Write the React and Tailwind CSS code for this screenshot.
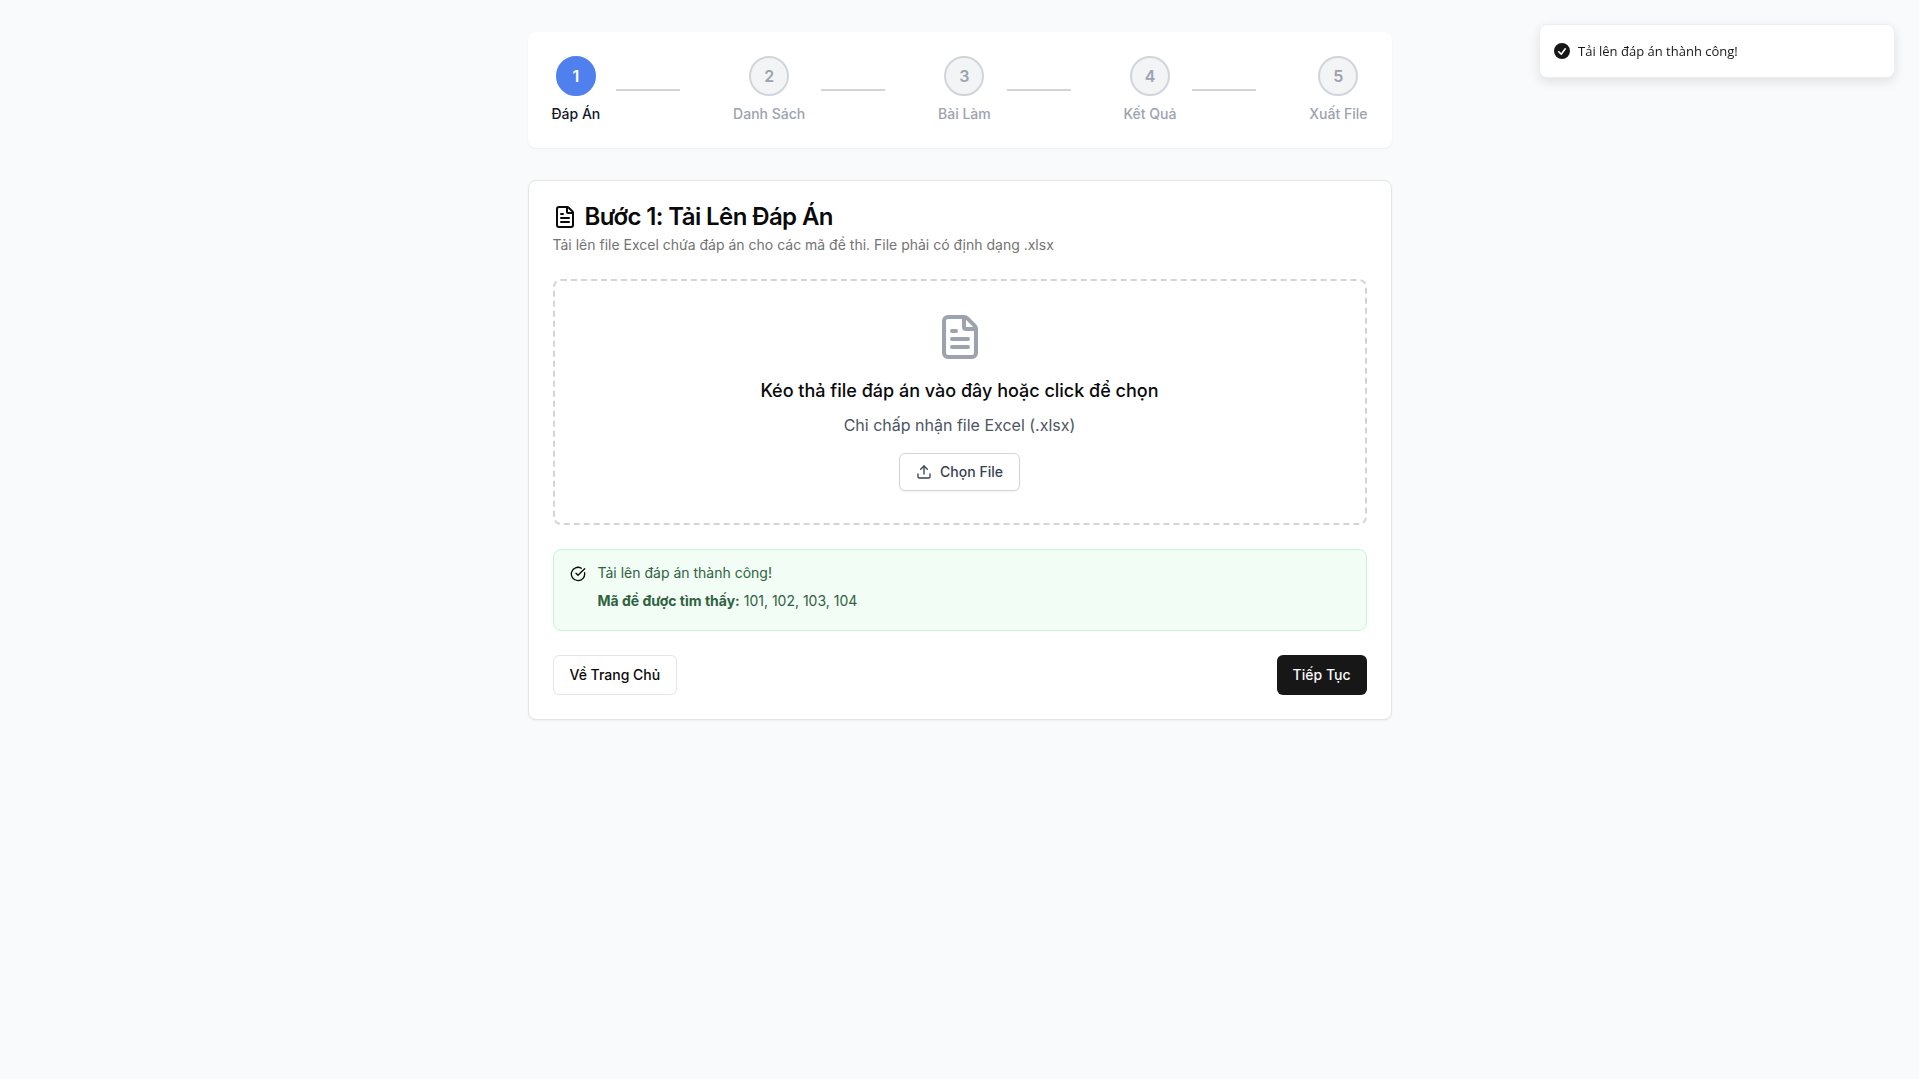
import { CircleCheckBig, FileText, Upload } from "lucide-react";

const steps = ["Đáp Án", "Danh Sách", "Bài Làm", "Kết Quả", "Xuất File"];

function Step({ n, label, active, last }) {
  return (
    <li className="flex items-center">
      <div className="flex flex-col items-center">
        <div
          className={
            active
              ? "flex size-10 items-center justify-center rounded-full border-2 border-[#4f80ee] bg-[#4f80ee] font-semibold text-white"
              : "flex size-10 items-center justify-center rounded-full border-2 border-[#d1d5db] bg-[#f3f4f6] font-semibold text-[#9ca3af]"
          }
        >
          {n}
        </div>
        <span className={active ? "mt-2 text-sm font-medium text-[#111827]" : "mt-2 text-sm font-medium text-[#9ca3af]"}>
          {label}
        </span>
      </div>
      {!last && <div className="mx-4 h-0.5 w-16 bg-[#d1d5db]" />}
    </li>
  );
}

export default function App() {
  return (
    <div className="min-h-screen bg-[#f9fafb] px-4 py-8 font-['Inter',sans-serif] text-[#0a0a0a]">
      <main className="mx-auto max-w-[864px]">
        <ol className="mb-8 flex items-center justify-between rounded-lg bg-white p-6 shadow-xs">
          {steps.map((s, i) => (
            <Step key={s} n={i + 1} label={s} active={i === 0} last={i === 4} />
          ))}
        </ol>
        <section className="rounded-lg border border-[#e5e5e5] bg-white p-6 shadow-xs">
          <h1 className="flex items-center gap-2 text-2xl leading-6 font-semibold tracking-tight">
            <FileText className="size-6" />
            Bước 1: Tải Lên Đáp Án
          </h1>
          <p className="mt-1.5 text-sm text-[#737373]">
            Tải lên file Excel chứa đáp án cho các mã đề thi. File phải có định dạng .xlsx
          </p>
          <div className="mt-6 flex flex-col items-center rounded-lg border-2 border-dashed border-[#d1d5db] p-8">
            <FileText className="size-12 text-[#9ca3af]" />
            <p className="mt-4 text-lg font-medium">Kéo thả file đáp án vào đây hoặc click để chọn</p>
            <p className="mt-2 text-base text-[#4b5563]">Chỉ chấp nhận file Excel (.xlsx)</p>
            <button type="button" className="mt-4 flex items-center rounded-md border border-[#d1d5db] bg-white px-4 py-2 text-sm font-medium text-[#374151] shadow-xs">
              <Upload className="mr-2 size-4" />
              Chọn File
            </button>
          </div>
          <div role="status" className="mt-6 flex gap-3 rounded-lg border border-[#c6f6d5] bg-[#f2fdf5] px-4 pt-[13px] pb-[19px] text-sm text-[#2f6240]">
            <CircleCheckBig className="mt-[3px] size-4 text-[#0a0a0a]" />
            <div>
              <p>Tải lên đáp án thành công!</p>
              <p className="mt-2"><strong>Mã đề được tìm thấy:</strong> 101, 102, 103, 104</p>
            </div>
          </div>
          <div className="mt-6 flex justify-between">
            <button type="button" className="h-10 rounded-md border border-[#e5e5e5] bg-white px-4 text-sm font-medium">Về Trang Chủ</button>
            <button type="button" className="h-10 rounded-md bg-[#171717] px-4 text-sm font-medium text-[#fafafa]">Tiếp Tục</button>
          </div>
        </section>
      </main>
      <div role="alert" className="fixed top-6 right-6 flex w-[356px] items-center gap-1.5 rounded-lg border border-[#ededed] bg-white py-4 pr-4 pl-3 font-['Open_Sans',sans-serif] text-[13px] leading-5 font-medium text-[#171717] shadow-[0_4px_12px_rgba(0,0,0,0.1)]">
        <svg viewBox="0 0 20 20" fill="currentColor" className="size-5">
          <path fillRule="evenodd" clipRule="evenodd" d="M10 18a8 8 0 100-16 8 8 0 000 16zm3.857-9.809a.75.75 0 00-1.214-.882l-3.483 4.79-1.88-1.88a.75.75 0 10-1.06 1.061l2.5 2.5a.75.75 0 001.137-.089l4-5.5z" />
        </svg>
        <span>Tải lên đáp án thành công!</span>
      </div>
    </div>
  );
}
